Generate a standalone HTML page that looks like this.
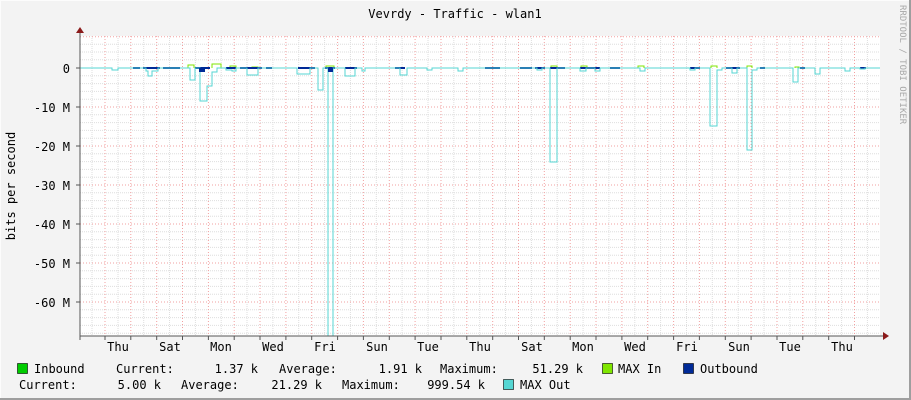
<!DOCTYPE html>
<html><head><meta charset="utf-8"><style>
html,body{margin:0;padding:0;background:#f3f3f3}
svg{display:block}
text{font-family:"DejaVu Sans Mono","Liberation Mono",monospace;font-size:12px;fill:#000}
</style></head><body>
<svg width="911" height="400" viewBox="0 0 911 400" xmlns="http://www.w3.org/2000/svg">
<rect x="0" y="0" width="911" height="400" fill="#f3f3f3"/>
<rect x="0.5" y="0.5" width="909" height="398" fill="none" stroke="#fcfcfc"/>
<line x1="0" y1="399" x2="911" y2="399" stroke="#9e9e9e" stroke-width="2"/>
<line x1="910" y1="0" x2="910" y2="400" stroke="#9e9e9e" stroke-width="2"/>
<rect x="80" y="36" width="800" height="300" fill="#ffffff"/>
<text x="455" y="18" text-anchor="middle">Vevrdy - Traffic - wlan1</text>
<text transform="translate(900,5) rotate(90)" style="font-size:9px;fill:#a8a8a8">RRDTOOL / TOBI OETIKER</text>
<text transform="translate(15,186) rotate(-90)" text-anchor="middle">bits per second</text>
<g text-anchor="end">
<text x="70" y="73">0</text>
<text x="70" y="112">-10 M</text>
<text x="70" y="151">-20 M</text>
<text x="70" y="190">-30 M</text>
<text x="70" y="229">-40 M</text>
<text x="70" y="268">-50 M</text>
<text x="70" y="307">-60 M</text>
</g>
<g text-anchor="middle">
<text x="118" y="351">Thu</text><text x="170" y="351">Sat</text><text x="221" y="351">Mon</text>
<text x="273" y="351">Wed</text><text x="325" y="351">Fri</text><text x="377" y="351">Sun</text>
<text x="428" y="351">Tue</text><text x="480" y="351">Thu</text><text x="532" y="351">Sat</text>
<text x="583" y="351">Mon</text><text x="635" y="351">Wed</text><text x="687" y="351">Fri</text>
<text x="739" y="351">Sun</text><text x="790" y="351">Tue</text><text x="842" y="351">Thu</text>
</g>
<g stroke="#000" stroke-width="0.6">
<rect x="17.5" y="363.5" width="10" height="10" fill="#00cc00"/>
<rect x="602.5" y="363.5" width="10" height="10" fill="#7fe600"/>
<rect x="683.5" y="363.5" width="10" height="10" fill="#002a97"/>
<rect x="503.5" y="379.5" width="10" height="10" fill="#55d6d3"/>
</g>
<text x="34" y="373">Inbound</text>
<text x="116" y="373">Current:</text>
<text x="258" y="373" text-anchor="end">1.37 k</text>
<text x="279" y="373">Average:</text>
<text x="422" y="373" text-anchor="end">1.91 k</text>
<text x="440" y="373">Maximum:</text>
<text x="583" y="373" text-anchor="end">51.29 k</text>
<text x="618" y="373">MAX In</text>
<text x="700" y="373">Outbound</text>
<text x="19" y="389">Current:</text>
<text x="161" y="389" text-anchor="end">5.00 k</text>
<text x="181" y="389">Average:</text>
<text x="322" y="389" text-anchor="end">21.29 k</text>
<text x="342" y="389">Maximum:</text>
<text x="485" y="389" text-anchor="end">999.54 k</text>
<text x="520" y="389">MAX Out</text>
<g stroke="#dedede" stroke-dasharray="1,1">
<path d="M80 44.2H880M80 52H880M80 59.8H880M80 75.8H880M80 83.6H880M80 91.4H880M80 99.2H880M80 114.8H880M80 122.6H880M80 130.4H880M80 138.2H880M80 153.8H880M80 161.6H880M80 169.4H880M80 177.2H880M80 192.8H880M80 200.6H880M80 208.4H880M80 216.2H880M80 231.8H880M80 239.6H880M80 247.4H880M80 255.2H880M80 270.8H880M80 278.6H880M80 286.4H880M80 294.2H880M80 309.8H880M80 317.6H880M80 325.4H880M80 333.2H880"/>
<path d="M92 36V336M118 36V336M143.7 36V336M169.5 36V336M195.4 36V336M221.2 36V336M247 36V336M272.9 36V336M298.7 36V336M324.6 36V336M350.4 36V336M376.3 36V336M402.1 36V336M428 36V336M453.8 36V336M479.7 36V336M505.5 36V336M531.4 36V336M557.2 36V336M583.1 36V336M608.9 36V336M634.8 36V336M660.6 36V336M686.5 36V336M712.3 36V336M738.2 36V336M764 36V336M789.9 36V336M815.7 36V336M841.6 36V336M867.4 36V336"/>
</g>
<g stroke="#f2a0a0" stroke-dasharray="1,2">
<path d="M80 36.8H880M80 107H880M80 146H880M80 185H880M80 224H880M80 263H880M80 302H880"/>
<path d="M105 36V336M130.8 36V336M156.7 36V336M182.5 36V336M208.4 36V336M234.2 36V336M260 36V336M285.9 36V336M311.7 36V336M337.6 36V336M363.4 36V336M389.3 36V336M415.1 36V336M441 36V336M466.8 36V336M492.7 36V336M518.5 36V336M544.3 36V336M570.2 36V336M596 36V336M621.9 36V336M647.7 36V336M673.6 36V336M699.4 36V336M725.3 36V336M751.1 36V336M777 36V336M802.8 36V336M828.7 36V336M854.5 36V336"/>
</g>
<g fill="none" stroke-width="1">
<path stroke="#7fe600" d="M188 68V65H194V68M212 68V64H221V68M230 68V66H236V68M252 68V67H258V68M326 68V66H334V68M551 68V66H557V68M581 68V66H587V68M638 68V66H644V68M711 68V66H717V68M747 68V66H752V68M795 68V67H799V68"/>
<path stroke="#002a97" stroke-width="2" d="M133 68H140M143 68H160M163 68H180M195 68H210M226 68H236M240 68H262M266 68H272M298 68H315M325 68H335M345 68H357M395 68H405M485 68H500M520 68H532M535 68H545M550 68H565M580 68H600M610 68H620M690 68H700M726 68H740M760 68H765M800 68H805M860 68H866"/>
<path stroke="#55d6d3" d="M80 68H112V70H118V68H146V71H148V76H152V71H158V68H190V80H195V68H200V101H207V86H212V72H217V68H226V70H232V71H236V68H247V75H258V68H297V74H310V68H318V90H323V68H328V336H333V68H345V76H355V68H362V71H365V68H400V75H407V68H427V70H432V68H458V71H463V68H537V70H542V68H550V162H557V68H580V71H586V68H595V71H600V68H640V71H645V68H690V70H695V68H710V126H717V70H722V68H732V73H737V68H747V150H752V70H757V68H793V82H798V68H815V74H820V68H845V71H850V68H860V69H865V68H880"/>
<rect x="199" y="68" width="6" height="4" fill="#002a97" stroke="none"/>
<rect x="328" y="68" width="5" height="4" fill="#002a97" stroke="none"/>
</g>
<line x1="80" y1="336" x2="885" y2="336" stroke="#555"/>
<line x1="80" y1="336" x2="80" y2="32" stroke="#555"/>
<path d="M76 33L80 27L84 33Z" fill="#8b1a1a"/>
<path d="M883 332L889 336L883 340Z" fill="#8b1a1a"/>
<g stroke="#555"><path d="M80 336v4M105 336v4M130.8 336v4M156.7 336v4M182.5 336v4M208.4 336v4M234.2 336v4M260 336v4M285.9 336v4M311.7 336v4M337.6 336v4M363.4 336v4M389.3 336v4M415.1 336v4M441 336v4M466.8 336v4M492.7 336v4M518.5 336v4M544.3 336v4M570.2 336v4M596 336v4M621.9 336v4M647.7 336v4M673.6 336v4M699.4 336v4M725.3 336v4M751.1 336v4M777 336v4M802.8 336v4M828.7 336v4M854.5 336v4M76 68h4M76 107h4M76 146h4M76 185h4M76 224h4M76 263h4M76 302h4"/></g>
</svg>
</body></html>
